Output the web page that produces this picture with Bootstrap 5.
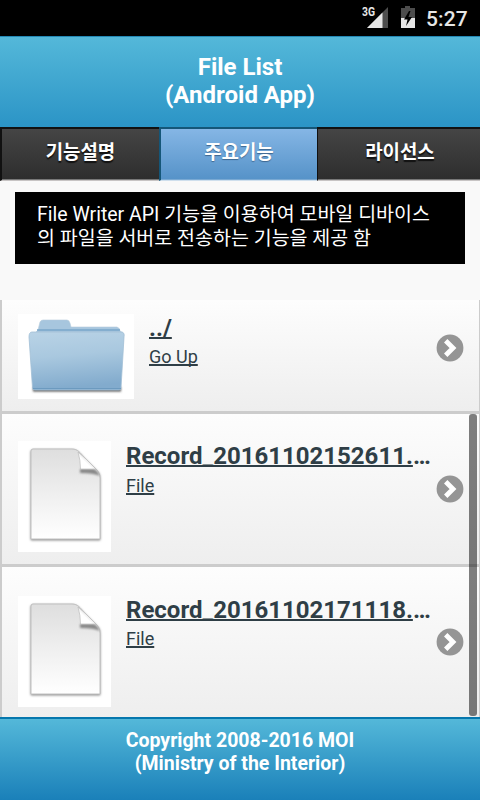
<!DOCTYPE html>
<html lang="ko">
<head>
<meta charset="utf-8">
<meta name="viewport" content="width=device-width, initial-scale=1">
<title>File List</title>
<link href="https://cdn.jsdelivr.net/npm/bootstrap@5.3.0/dist/css/bootstrap.min.css" rel="stylesheet">
<style>
body{font-family:Roboto,"Noto Sans CJK KR",sans-serif;background:#f9f9f9;height:800px;color:#2f3e46}
.status{height:36px;background:#000;color:#e6e6e6;padding-right:12px}
.clock{font-size:21px;font-weight:500;line-height:38px;width:42px;margin-left:11px;letter-spacing:.1px}
.status svg{margin-right:-1px}
.titlebar{height:91px;background:linear-gradient(#54b8d9,#2b94c6);border-top:1px solid #2388b5;padding-top:16px}
.titlebar h1{font-size:24px;line-height:28px;font-weight:700;color:#fff}
.tabs{height:54px;display:grid;grid-template-columns:159px 158px 163px}
.tabs .tab{border:0 solid #111;border-top-width:2px;border-bottom:1px solid #c7c4c4;box-shadow:inset 0 -1px #777;background:linear-gradient(#454545,#2d2d2d);color:#fff;font-size:18.9px;font-weight:700;line-height:25px;padding-top:11px;text-align:center;text-shadow:0 2px 1px #111;border-radius:0}
.tabs .tab:first-child{border-left-width:2px}
.tabs .tab:last-child{border-left-width:1px;padding-left:2px}
.tabs .tab.active{border-left-width:2px;border-color:#155678;border-bottom-color:#cfdfed;box-shadow:inset 0 -1px #79a9d3;background:linear-gradient(#85b6e5,#5592c8);text-shadow:0 1px 1px #3e6790}
.notice{margin:11px 15px 36px;height:72px;padding:11px 22px 0;background:#000;color:#fff;font-size:19.5px;line-height:24px}
.files{height:417px}
.file-row{height:153px;border:0 solid #ccc;border-width:0 1px 3px 2px;background:linear-gradient(#fdfdfd,#eee);padding:27px 15px 0 16px;color:#2f3e46;text-decoration:none}
.file-row:first-child{height:114px;padding-top:14px}
.file-row:last-child{height:150px;border-bottom:0;padding-top:29px}
.thumb{background:#fff;width:93px;height:111px}
.thumb.folder{width:116px;height:85px}
.label{margin-left:15px}
.name{font-size:24px;line-height:30px;font-weight:700}
.kind{font-size:18px;line-height:24px;padding-top:3px}
.file-row:first-child .label{margin-top:-1px}
.file-row:first-child .kind{padding-top:2px}
.file-row:last-child .label{margin-top:-1px}
.file-row:last-child .kind{padding-top:2px}
.u{text-decoration:underline;text-decoration-thickness:1.5px;text-underline-offset:1px;text-decoration-skip-ink:none}
.arrow{width:28px;height:28px;margin-top:34px}
.file-row:first-child .arrow{margin-top:20px}
.file-row:last-child .arrow{margin-top:32px}
.scroll-thumb{left:469px;top:414px;width:8px;height:302px;border-radius:3px;background:rgba(0,0,0,.5)}
.foot{height:83px;border-top:2px solid #0577ad;background:linear-gradient(#54b8d9,#1a80b9);color:#fff;font-size:19.5px;line-height:23px;font-weight:700;padding-top:10px}
</style>
<script src="https://cdn.jsdelivr.net/npm/bootstrap@5.3.0/dist/js/bootstrap.bundle.min.js"></script>
</head>
<body class="overflow-hidden position-relative">
<svg width="0" height="0" class="position-absolute">
  <defs>
    <linearGradient id="fold" x2=".15" y2="1"><stop stop-color="#b9d3e6"/><stop offset=".45" stop-color="#a9c8df"/><stop offset="1" stop-color="#82abcd"/></linearGradient>
    <linearGradient id="paper" x2="0" y2="1"><stop stop-color="#dedede"/><stop offset=".5" stop-color="#efefef"/><stop offset="1" stop-color="#fff"/></linearGradient>
    <linearGradient id="curl" x1="0" y1="1" x2="1" y2="0"><stop stop-color="#fff"/><stop offset=".4" stop-color="#fff"/><stop offset=".65" stop-color="#d4d4d4"/></linearGradient>
    <filter id="soft" x="-20%" y="-60%" width="140%" height="220%"><feGaussianBlur stdDeviation="1.2"/></filter>
    <clipPath id="sheet"><path d="M15 8H54C60 8 62 12 66 16L78 28C81 31 82 33 82 37V98H13V10Q13 8 15 8Z"/></clipPath>
    <symbol id="doc" viewBox="0 0 93 111">
      <path d="M15 9H54C60 9 62 13 66 17L78 29C81 32 82 33 82 38V99H13V10Z" fill="#888" stroke="#999" filter="url(#soft)"/>
      <path d="M15 8H54C60 8 62 12 66 16L78 28C81 31 82 33 82 37V98H13V10Q13 8 15 8Z" fill="url(#paper)" stroke="#c0c0c0"/>
      <g clip-path="url(#sheet)"><path d="M62 28H76Q80 30 82 35Q76 32 62 32Z" fill="#888" filter="url(#soft)"/></g>
      <path d="M60 11Q62.500 19 62.500 28H78L68 18Z" fill="url(#curl)" stroke="#bbb" stroke-width=".7"/>
    </symbol>
    <symbol id="go" viewBox="0 0 28 28">
      <circle cx="14" cy="14" r="13.400" fill="#959595"/>
      <path d="M9.700 6.800L17 14L9.700 21.200" fill="none" stroke="#fff" stroke-width="4.800"/>
    </symbol>
  </defs>
</svg>

<div class="status d-flex justify-content-end">
  <svg width="54" height="36" viewBox="0 0 54 36">
    <text x="0" y="16" font-size="12" font-weight="700" fill="#e6e6e6" textLength="13" lengthAdjust="spacingAndGlyphs">3G</text>
    <path d="M26 7V28H5Z" fill="#4d4d4d"/><path d="M20.500 12.500V28H5Z" fill="#e6e6e6"/>
    <path d="M39 8H43V6H48V8H53V28H39Z" fill="#4d4d4d"/><path d="M39 18H53V28H39Z" fill="#e6e6e6"/>
    <path d="M47 11L42 19.500H45.500L44 26L50 17H46.500L48.500 11Z" fill="#000"/>
  </svg>
  <div class="clock text-nowrap">5:27</div>
</div>

<header class="titlebar text-center"><h1 class="m-0">File List<br>(Android App)</h1></header>

<nav class="tabs">
  <a class="tab text-decoration-none" href="#">기능설명</a>
  <a class="tab active text-decoration-none" href="#">주요기능</a>
  <a class="tab text-decoration-none" href="#">라이선스</a>
</nav>

<div class="notice text-nowrap">File Writer API 기능을 이용하여 모바일 디바이스<br>의 파일을 서버로 전송하는 기능을 제공 함</div>

<main class="files">
  <a class="file-row d-flex align-items-start" href="#">
    <svg class="thumb folder flex-shrink-0" viewBox="0 0 116 85">
      <rect x="15" y="73" width="88" height="4.500" fill="#555" filter="url(#soft)"/>
      <path d="M17 19L20 16L22 8Q23 6 25 6H49Q51 6 52 9L53 13H99Q102 14 102 17L105 19V30H16Z" fill="#a7c6de" stroke="#b5cbdb" stroke-width=".6"/>
      <path d="M19 16H102" stroke="#78a6ca" stroke-width="1.500"/>
      <path d="M14 18H103Q107 18 106 23L103 74Q103 76 101 76H17Q14.500 76 14.500 74L11 23Q11 18 14 18Z" fill="url(#fold)" stroke="#a2bfd5" stroke-width=".8"/>
      <path d="M15 74.500H103" stroke="#6c9abf" stroke-width="1"/>
    </svg>
    <div class="label flex-grow-1 text-nowrap">
      <div class="name"><span class="u">../</span></div>
      <div class="kind"><span class="u">Go Up</span></div>
    </div>
    <svg class="arrow flex-shrink-0"><use href="#go"/></svg>
  </a>
  <a class="file-row d-flex align-items-start" href="#">
    <svg class="thumb flex-shrink-0"><use href="#doc"/></svg>
    <div class="label flex-grow-1 text-nowrap">
      <div class="name"><span class="u">Record_20161102152611.</span>…</div>
      <div class="kind"><span class="u">File</span></div>
    </div>
    <svg class="arrow flex-shrink-0"><use href="#go"/></svg>
  </a>
  <a class="file-row d-flex align-items-start" href="#">
    <svg class="thumb flex-shrink-0"><use href="#doc"/></svg>
    <div class="label flex-grow-1 text-nowrap">
      <div class="name"><span class="u">Record_20161102171118.</span>…</div>
      <div class="kind"><span class="u">File</span></div>
    </div>
    <svg class="arrow flex-shrink-0"><use href="#go"/></svg>
  </a>
</main>
<div class="scroll-thumb position-absolute"></div>
<footer class="foot text-center">Copyright 2008-2016 MOI<br>(Ministry of the Interior)</footer>
</body>
</html>
